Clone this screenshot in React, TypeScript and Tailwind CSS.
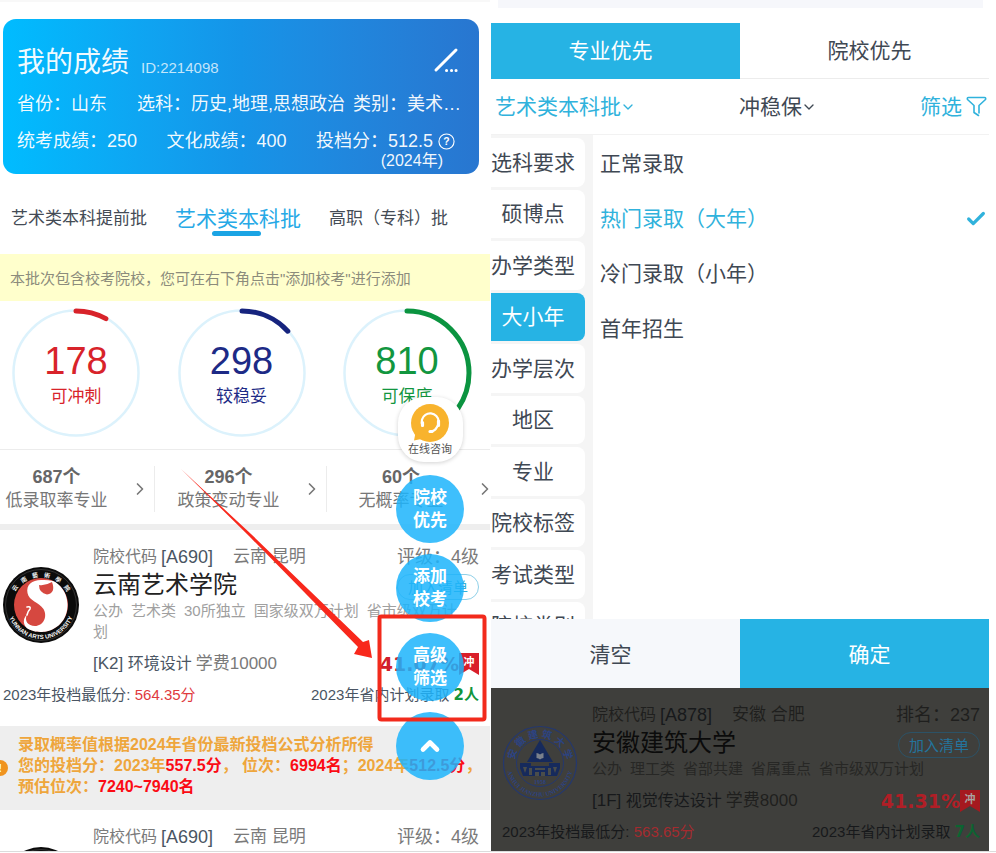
import React from "react";
import { Check, ChevronDown, ChevronRight, ChevronUp } from "lucide-react";

const stats = [
  { value: "178", label: "可冲刺", text: "text-[#d8232a]", stroke: "#d8232a", share: 0.08 },
  { value: "298", label: "较稳妥", text: "text-[#1d2a86]", stroke: "#16247e", share: 0.132 },
  { value: "810", label: "可保底", text: "text-[#12963f]", stroke: "#0b9440", share: 0.345 },
];

const groups = [
  { count: "687个", label: "低录取率专业" },
  { count: "296个", label: "政策变动专业" },
  { count: "60个", label: "无概率专业" },
];

const filters = [
  "选科要求",
  "硕博点",
  "办学类型",
  "大小年",
  "办学层次",
  "地区",
  "专业",
  "院校标签",
  "考试类型",
  "院校类别",
];

const options = ["正常录取", "热门录取（大年）", "冷门录取（小年）", "首年招生"];

type School = {
  code: string;
  province: string;
  city: string;
  rank: string;
  name: string;
  tags: string[];
  majorCode: string;
  major: string;
  fee: string;
  chance: string;
  lowest: string;
  admitted: string;
};

const yunnan: School = {
  code: "[A690]",
  province: "云南",
  city: "昆明",
  rank: "评级：4级",
  name: "云南艺术学院",
  tags: ["公办", "艺术类", "30所独立", "国家级双万计划", "省市级双万计划"],
  majorCode: "[K2]",
  major: "环境设计",
  fee: "学费10000",
  chance: "41.07%",
  lowest: "564.35分",
  admitted: "2人",
};

const anhui: School = {
  code: "[A878]",
  province: "安徽",
  city: "合肥",
  rank: "排名：237",
  name: "安徽建筑大学",
  tags: ["公办", "理工类", "省部共建", "省属重点", "省市级双万计划"],
  majorCode: "[1F]",
  major: "视觉传达设计",
  fee: "学费8000",
  chance: "41.31%",
  lowest: "563.65分",
  admitted: "7人",
};

const lightTheme = {
  soft: "text-[#7a7a7a]",
  ink: "text-[#4a5563]",
  name: "text-[#222]",
  tags: "text-[#a0a0a0]",
  pill: "border-[#8fd0e8] text-[#35afd8]",
  chance: "text-[#d0202b]",
  ribbon: "#d91f2a",
  ribbonText: "#ffffff",
  lowest: "text-[#e03a3e]",
  admitted: "text-[#12943c]",
};

const darkTheme = {
  soft: "text-[#1f1f1e]",
  ink: "text-[#17191b]",
  name: "text-[#0b0b0b]",
  tags: "text-[#272725]",
  pill: "border-[#2c5266] text-[#24749c]",
  chance: "text-[#b01e26]",
  ribbon: "#a5191f",
  ribbonText: "#a8a3a0",
  lowest: "text-[#a52b2f]",
  admitted: "text-[#0c6431]",
};

function YunnanLogo({ id }: { id: string }) {
  return (
    <svg viewBox="0 0 76 76" className="block size-[76px]" aria-hidden="true">
      <defs>
        <path id={`${id}-low`} d="M4 38 A34 34 0 0 0 72 38" />
        <path id={`${id}-top`} d="M8 40 A30 30 0 0 1 68 40" />
      </defs>
      <circle cx="38" cy="38" r="38" fill="#0b0b0b" />
      <circle cx="38" cy="38" r="35.5" fill="none" stroke="#444" strokeWidth="0.7" />
      <circle cx="38" cy="38" r="27" fill="#d64840" />
      <path
        d="M38 13C29 13 23 18 24.500 26C26 34 36 35 40.500 42C45 50 40 59 32 59C25 59 21 54 24 47.500C18 53 21 62 29 63.500C34 65.500 40 65 43 64.500C56 62 65 51 64.500 37C64 25 57 17 50 14Q44 12.500 38 13Z"
        fill="#fff"
      />
      <path d="M36 18Q42 19 49 15Q53 26 44 27.500Q36 26 36 18Z" fill="#d64840" />
      <path d="M24 40q4-1 3 2q-2 2-3 6" fill="none" stroke="#fff" strokeWidth="1.600" strokeLinecap="round" />
      <text fill="#f5f5f5" fontSize="6" fontWeight="700" fontFamily="Liberation Sans, sans-serif">
        <textPath href={`#${id}-low`} startOffset="50%" textAnchor="middle">
          YUNNAN ARTS UNIVERSITY
        </textPath>
      </text>
      <text fill="#f5f5f5" fontSize="6" fontWeight="700" fontFamily="Noto Sans CJK SC, sans-serif">
        {["云", "南", "藝", "術", "學", "院"].map((ch, i) => (
          <textPath key={ch} href={`#${id}-top`} startOffset={`${20 + i * 12}%`} textAnchor="middle">
            {ch}
          </textPath>
        ))}
      </text>
    </svg>
  );
}

function AnhuiLogo() {
  return (
    <svg viewBox="0 0 76 76" className="block size-[76px]" aria-hidden="true">
      <defs>
        <path id="anhui-low" d="M4.500 38 A33.500 33.500 0 0 0 71.500 38" />
        <path id="anhui-top" d="M12.500 38 A25.500 25.500 0 0 1 63.500 38" />
      </defs>
      <circle cx="38" cy="38" r="36.500" fill="none" stroke="#24386f" strokeWidth="1.200" />
      <circle cx="38" cy="38" r="23.500" fill="none" stroke="#24386f" strokeWidth="1" />
      <path d="M38 15L51 37H25Z" fill="#162a5c" />
      <path d="M34.500 28q2 0 3.500 1.500q1.500-1.500 3.500-1.500v5q-2 0-3.500 1.500q-1.500-1.500-3.500-1.500z" fill="#7b818c" />
      <path d="M18 38h11v3h18v-3h11v5l-3 8H21l-3-8z" fill="#162a5c" />
      <path d="M21 42h4l-2 6zM55 42h-4l2 6zM27 43h3v7h-3zM46 43h3v7h-3zM33 43h10v2H33zM33 47h4v4h-4zM39 47h4v4h-4z" fill="#4a4d4b" />
      <text x="38" y="59" textAnchor="middle" fontSize="6" fontWeight="700" fill="#2c4382" fontFamily="Liberation Serif, serif">
        1958
      </text>
      <text fill="#2c4382" fontSize="6" fontWeight="700" fontFamily="Liberation Serif, serif">
        <textPath href="#anhui-low" startOffset="50%" textAnchor="middle">
          ANHUI JIANZHU UNIVERSITY
        </textPath>
      </text>
      <text fill="#2c4382" fontSize="10" fontWeight="700" fontFamily="Noto Sans CJK SC, serif">
        {["安", "徽", "建", "筑", "大", "学"].map((ch, i) => (
          <textPath key={ch} href="#anhui-top" startOffset={`${10 + i * 16}%`} textAnchor="middle">
            {ch}
          </textPath>
        ))}
      </text>
    </svg>
  );
}

function SchoolCard({ school, logo, dark = false }: { school: School; logo: React.ReactNode; dark?: boolean }) {
  const t = dark ? darkTheme : lightTheme;
  return (
    <article className="pt-[15px] pb-[19px]">
      <div className="flex">
        <div className="w-[90px] shrink-0 pt-[22px]">{logo}</div>
        <div className="min-w-0 flex-1">
          <div className={`flex h-6 items-center ${t.soft}`}>
            <span className="text-base">院校代码</span>
            <span className={`ml-1 text-lg ${t.ink}`}>{school.code}</span>
            <span className="ml-5 text-[17px]">
              {school.province} {school.city}
            </span>
            <span className="ml-auto text-lg">{school.rank}</span>
          </div>
          <div className="flex h-[31px] items-center justify-between">
            <h2 className={`text-2xl ${t.name}`}>{school.name}</h2>
            <button
              type="button"
              className={`mt-[5px] h-[26px] rounded-full border px-[10px] text-[15px] leading-none ${t.pill}`}
            >
              加入清单
            </button>
          </div>
          <p className={`mr-3 text-[15px] leading-[21px] ${t.tags}`}>
            {school.tags.map((tag) => (
              <span key={tag} className="mr-2">
                {tag}
              </span>
            ))}
          </p>
          <div className="mt-[9px] flex h-[26px] items-center text-base">
            <span className={t.ink}>
              <span className="text-[17px]">{school.majorCode}</span> {school.major}
            </span>
            <span className={`ml-1 text-[17px] ${t.soft}`}>{school.fee}</span>
            <span className={`ml-auto font-['DejaVu_Sans'] text-[19px] font-bold ${t.chance}`}>{school.chance}</span>
            <svg viewBox="0 0 20 22" className="h-[22px] w-5" aria-hidden="true">
              <path d="M0 0H20V22L10 16L0 22Z" fill={t.ribbon} />
              <text x="10" y="13" textAnchor="middle" fontSize="11" fontWeight="700" fill={t.ribbonText}>
                冲
              </text>
            </svg>
          </div>
        </div>
      </div>
      <div className={`mt-[6px] flex h-6 items-center justify-between text-[15px] ${t.ink}`}>
        <span>
          2023年投档最低分: <span className={t.lowest}>{school.lowest}</span>
        </span>
        <span>
          2023年省内计划录取{" "}
          <b className={`font-['DejaVu_Sans','Noto_Sans_CJK_SC'] ${t.admitted}`}>{school.admitted}</b>
        </span>
      </div>
    </article>
  );
}

function Ring({ stat }: { stat: (typeof stats)[number] }) {
  const length = 2 * Math.PI * 62;
  return (
    <div className="relative size-[130px]">
      <svg viewBox="0 0 130 130" className="block size-full" aria-hidden="true">
        <circle cx="65" cy="65" r="62.500" fill="none" stroke="#dcf2fc" strokeWidth="2.500" />
        <circle
          cx="65"
          cy="65"
          r="62"
          fill="none"
          stroke={stat.stroke}
          strokeWidth="5"
          strokeLinecap="round"
          strokeDasharray={`${length * stat.share} ${length}`}
          transform="rotate(-90 65 65)"
        />
      </svg>
      <div className={`absolute inset-0 flex flex-col items-center justify-center pt-1 ${stat.text}`}>
        <strong className="text-[38px] leading-[44px] font-normal">{stat.value}</strong>
        <span className="text-[17px] leading-7">{stat.label}</span>
      </div>
    </div>
  );
}

function FloatingTools() {
  return (
    <div className="absolute top-[397px] right-[26px] flex flex-col items-center">
      <button
        type="button"
        className="flex h-[65px] w-[65px] flex-col items-center rounded-[26px] bg-white pt-[7px] text-[#555] shadow-[0_1px_4px_rgba(0,0,0,0.18)]"
      >
        <svg viewBox="0 0 38 38" className="size-[38px]" aria-hidden="true">
          <circle cx="19" cy="19" r="19" fill="#f8b32d" />
          <path d="M5 26L3 36.500L15 34z" fill="#f8b32d" />
          <path d="M11.500 21.500A8.500 8.500 0 1 1 26 23Q24 27 20.500 27.500" fill="none" stroke="#fff" strokeWidth="2.200" strokeLinecap="round" />
          <path d="M27.500 17v4.500M11.500 18.500v3M19 27.500h2" fill="none" stroke="#fff" strokeWidth="3.200" strokeLinecap="round" />
        </svg>
        <span className="text-[11px] leading-[14px]">在线咨询</span>
      </button>
      <div className="mt-[13px] flex flex-col gap-[11px]">
        {[
          ["院校", "优先"],
          ["添加", "校考"],
          ["高级", "筛选"],
        ].map(([a, b]) => (
          <button
            key={a}
            type="button"
            className="size-[68px] rounded-full bg-[#1cb4fb]/85 text-[17px] leading-[23px] font-bold text-white"
          >
            {a}
            <br />
            {b}
          </button>
        ))}
        <button
          type="button"
          aria-label="回到顶部"
          className="flex size-[68px] items-center justify-center rounded-full bg-[#1cb4fb]/85 text-white"
        >
          <ChevronUp className="size-7" strokeWidth={4} />
        </button>
      </div>
    </div>
  );
}

function ScorePanel() {
  return (
    <section className="relative min-w-0 flex-[490] overflow-hidden bg-white">
      <div className="h-[2px] bg-[#f8f8f8]" />
      <div className="mt-[17px] mr-[11px] ml-[3px] h-[155px] rounded-[13px] bg-linear-to-r from-[#00bcff] via-[#1594e8] to-[#2876d0] px-[14px] pt-[22px] text-lg text-white/95">
        <div className="flex h-11 items-center">
          <h1 className="text-[28px] leading-10">我的成绩</h1>
          <span className="mt-[10px] ml-3 text-[15px] text-white/75">ID:2214098</span>
          <button type="button" aria-label="编辑" className="mr-[6px] mb-[6px] ml-auto">
            <svg viewBox="0 0 26 26" className="size-[26px]" fill="none" stroke="#fff" strokeLinecap="round" aria-hidden="true">
              <path d="M3 23L23 3" strokeWidth="3" />
              <path d="M13.500 23.500h.1M18.500 23.500h.1M23 23.500h.1" strokeWidth="3" />
            </svg>
          </button>
        </div>
        <div className="flex h-[38px] items-center whitespace-nowrap">
          <span className="w-[120px]">省份：山东</span>
          <span>选科：历史,地理,思想政治</span>
          <span className="ml-2">类别：美术…</span>
        </div>
        <div className="flex h-9 items-center justify-between whitespace-nowrap">
          <span>统考成绩：250</span>
          <span>文化成绩：400</span>
          <span className="mr-[10px] flex items-center gap-[5px]">
            投档分：512.5
            <svg viewBox="0 0 18 18" className="size-[17px]" aria-hidden="true">
              <circle cx="9" cy="9" r="8" fill="none" stroke="#fff" strokeWidth="1.200" />
              <text x="9" y="13" textAnchor="middle" fontSize="11" fontWeight="700" fill="#fff">
                ?
              </text>
            </svg>
          </span>
        </div>
        <p className="-mt-2 mr-[22px] text-right text-base leading-5">(2024年)</p>
      </div>

      <nav className="flex h-20 items-center justify-between pt-[10px] pr-[42px] pl-[11px] text-[17px] text-[#444b55]">
        <button type="button">艺术类本科提前批</button>
        <button type="button" className="relative text-[21px] text-[#26a9e6]">
          艺术类本科批
          <span className="absolute -bottom-px left-[37px] h-[5px] w-[49px] rounded-full bg-[#1ba4e4]" />
        </button>
        <button type="button">高职（专科）批</button>
      </nav>

      <p className="flex h-[47px] items-center bg-[#ffffcc] pt-[3px] pl-[10px] text-[15px] text-[#8c8c7c]">
        本批次包含校考院校，您可在右下角点击"添加校考"进行添加
      </p>

      <div className="flex h-[149px] justify-between border-b border-[#ececec] pt-[7px] pr-[18px] pl-[11px]">
        {stats.map((s) => (
          <Ring key={s.label} stat={s} />
        ))}
      </div>

      <div className="-mr-[9px] -ml-[17px] grid h-[74px] grid-cols-3 pt-[16px] pb-3 text-[#666]">
        {groups.map((g) => (
          <button
            key={g.label}
            type="button"
            className="flex items-center border-r border-[#ececec] pr-1 last:border-r-0"
          >
            <span className="flex flex-1 flex-col text-center leading-[23px]">
              <b className="text-lg leading-[23px]">{g.count}</b>
              <span className="text-[17px] text-[#777]">{g.label}</span>
            </span>
            <ChevronRight className="size-5 text-[#777]" strokeWidth={2} />
          </button>
        ))}
      </div>
      <div className="h-[6px] bg-[#eee]" />

      <div className="pr-[11px] pl-[3px]">
        <SchoolCard school={yunnan} logo={<YunnanLogo id="yunnan-a" />} />
      </div>

      <div className="flex h-[84px] items-center bg-[#eee]">
        <span className="-ml-2 flex size-4 shrink-0 items-center justify-center rounded-full bg-[#f0941f] text-[11px] font-bold text-white">
          !
        </span>
        <p className="mb-[6px] ml-[10px] text-base leading-[21px] font-bold whitespace-nowrap text-[#eea63c]">
          录取概率值根据2024年省份最新投档公式分析所得
          <br />
          您的投档分：2023年<span className="text-[#fb0b14]">557.5分</span>， 位次：
          <span className="text-[#fb0b14]">6994名</span>；2024年<span className="text-[#fb0b14]">512.5分</span>，
          <br />
          预估位次：<span className="text-[#fb0b14]">7240~7940名</span>
        </p>
      </div>

      <div className="pr-[11px] pl-[3px]">
        <SchoolCard school={yunnan} logo={<YunnanLogo id="yunnan-b" />} />
      </div>

      <FloatingTools />

      <svg viewBox="0 0 320 260" className="pointer-events-none absolute top-[465px] left-[175px] h-[260px] w-80" aria-hidden="true">
        <path d="M6 4L76 69L188 177L194 175L197 193L179 189L183 182L74 71Z" fill="#f8281c" />
        <rect x="204.500" y="151.500" width="105" height="103" rx="2" fill="none" stroke="#f22a1c" strokeWidth="4" />
      </svg>
    </section>
  );
}

function FilterPanel() {
  return (
    <section className="flex min-w-0 flex-[498] flex-col overflow-hidden bg-white text-[21px] text-[#3f4853]">
      <div className="mr-[6px] ml-[7px] h-2 shrink-0 bg-[#f6f7fb]" />
      <div className="mt-[15px] grid h-14 shrink-0 grid-cols-2 border-b border-[#ececec]">
        <button type="button" className="-mb-px bg-[#26b3e4] pr-[10px] text-white">
          专业优先
        </button>
        <button type="button" className="pl-[10px]">
          院校优先
        </button>
      </div>
      <div className="flex h-14 shrink-0 items-center justify-between border-b border-[#f2f2f2] pr-[2px] pl-1">
        <button type="button" className="flex items-center text-[#30b2dc]">
          艺术类本科批
          <ChevronDown className="-ml-px size-4" strokeWidth={2} />
        </button>
        <button type="button" className="flex items-center">
          冲稳保
          <ChevronDown className="-ml-px size-4" strokeWidth={2} />
        </button>
        <button type="button" className="flex items-center gap-1 text-[#30b2dc]">
          筛选
          <svg viewBox="0 0 21 21" className="size-[21px]" fill="none" stroke="currentColor" strokeWidth="1.600" strokeLinejoin="round" strokeLinecap="round" aria-hidden="true">
            <path d="M12.500 19.500L8 16.500V9.500L1.500 3.500Q.8 1.500 2.500 1.500H18.500Q20.200 1.500 19.500 3.500L13 9.500V17" />
          </svg>
        </button>
      </div>
      <div className="flex h-[484px] shrink-0 overflow-hidden">
        <div className="w-[102px] shrink-0 bg-[#f5f5f5] pt-[3px] pr-2">
          <div className="grid h-[512px] grid-rows-10 gap-[3px]">
            {filters.map((f) => (
              <button
                key={f}
                type="button"
                className={`rounded-r-lg pr-[10px] whitespace-nowrap ${f === "大小年" ? "bg-[#26b3e4] text-white" : "bg-white"}`}
              >
                {f}
              </button>
            ))}
          </div>
        </div>
        <ul className="flex-1 pt-px pr-[2px] pl-[7px]">
          {options.map((o, i) => (
            <li key={o}>
              <button
                type="button"
                className={`flex h-[55px] w-full items-center justify-between ${i === 1 ? "text-[#30b2dc]" : ""}`}
              >
                {o}
                {i === 1 && <Check className="size-[22px]" strokeWidth={3.5} />}
              </button>
            </li>
          ))}
        </ul>
      </div>
      <div className="grid h-[69px] shrink-0 grid-cols-2">
        <button type="button" className="bg-[#f6f8fb] pt-[3px] pr-[10px]">
          清空
        </button>
        <button type="button" className="bg-[#26b3e4] pt-[3px] pl-[10px] text-white">
          确定
        </button>
      </div>
      <div className="flex-1 bg-[#3f3f3c] pr-[9px] pl-[11px]">
        <SchoolCard school={anhui} logo={<AnhuiLogo />} dark />
      </div>
    </section>
  );
}

export default function App() {
  return (
    <div className="flex h-screen flex-col bg-white pb-px font-['Liberation_Sans','Noto_Sans_CJK_SC',sans-serif]">
      <main className="flex min-h-0 flex-1 gap-px overflow-hidden border-b border-[#dcdcdc] pr-[7px]">
        <ScorePanel />
        <FilterPanel />
      </main>
    </div>
  );
}
